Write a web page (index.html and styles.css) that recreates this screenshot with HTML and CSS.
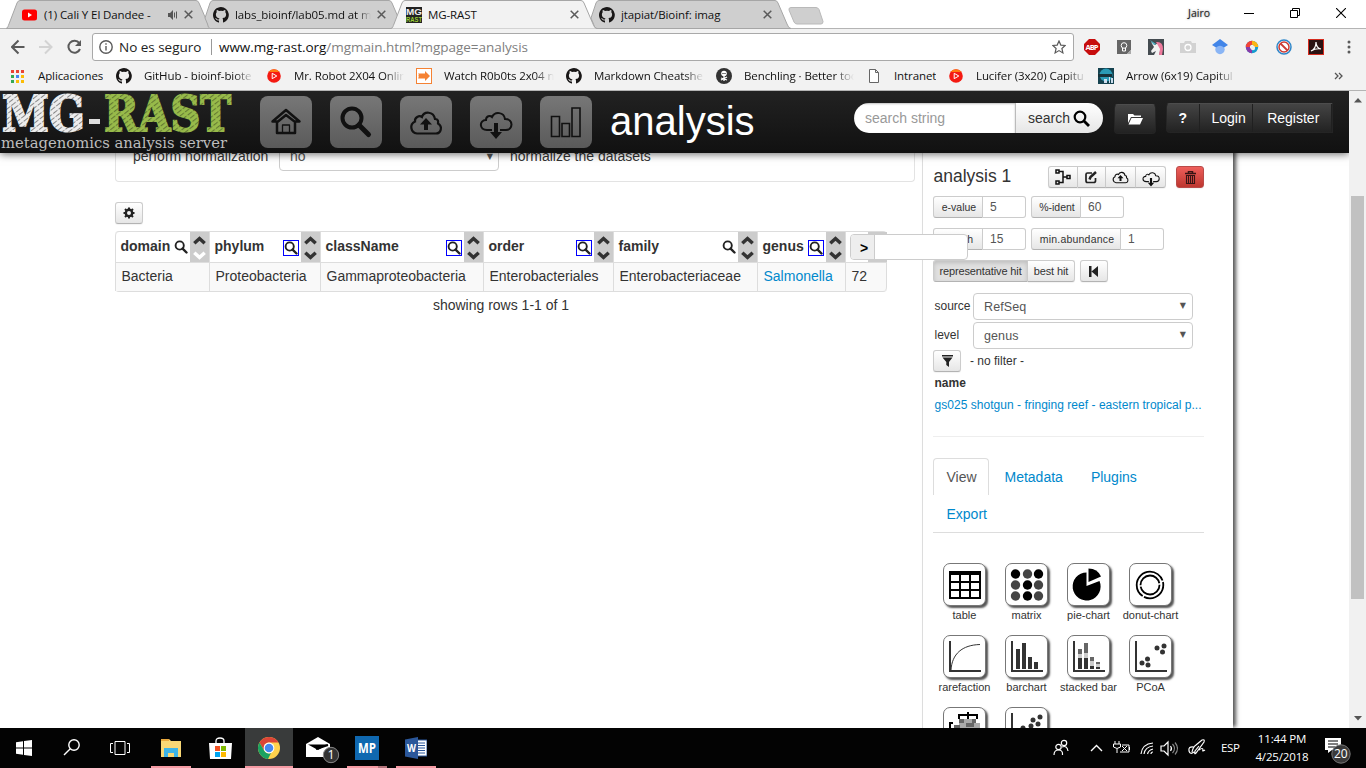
FILE: index.html
```html
<!DOCTYPE html>
<html lang="es">
<head>
<meta charset="utf-8">
<title>MG-RAST</title>
<link rel="stylesheet" href="styles.css">
</head>
<body>
<svg class="defs" width="0" height="0">
  <defs>
    <symbol id="github" viewBox="0 0 16 16"><path fill="#191717" d="M8 0C3.6 0 0 3.6 0 8c0 3.5 2.3 6.500 5.500 7.600.4.1.5-.2.5-.4v-1.700c-2.200.5-2.700-.9-2.700-.9-.4-.9-.9-1.200-.9-1.200-.7-.5.1-.5.1-.5.8.1 1.200.8 1.200.8.7 1.200 1.900.9 2.300.7 0-.5.3-.9.5-1.100-1.800-.2-3.600-.9-3.600-4 0-.9.3-1.600.8-2.100 0-.2-.3-1 .1-2.100 0 0 .7-.2 2.200.8a8 8 0 0 1 4 0c1.500-1 2.200-.8 2.200-.8.4 1.100.1 1.900.1 2.100.5.6.8 1.300.8 2.100 0 3.100-1.900 3.700-3.700 3.900.3.3.6.8.6 1.500v2.400c0 .2.1.5.6.4A8 8 0 0 0 8 0z"/></symbol>
    <symbol id="close" viewBox="0 0 9 9"><path d="M.7.7l7.600 7.600M8.300.7L.7 8.300" stroke="#5a5a5a" stroke-width="1.500"/></symbol>
    <symbol id="play" viewBox="0 0 14 14"><circle cx="7" cy="7" r="6.800" fill="#f41a12"/><path d="M1.500 3a6.800 6.800 0 0 1 11 0z" fill="#ff7a10"/><path d="M5.200 4.300v5.400L9.800 7z" fill="none" stroke="#fff"/></symbol>
    <symbol id="glass" viewBox="0 0 14 14"><circle cx="5.700" cy="5.500" r="4.100" fill="none" stroke="#222" stroke-width="1.900"/><path d="M8.600 8.600l3.900 3.900" stroke="#222" stroke-width="2.400" stroke-linecap="round"/></symbol>
    <symbol id="up" viewBox="0 0 12 8"><path d="M1.200 6.600L6 2.200l4.800 4.400" fill="none" stroke="currentColor" stroke-width="3.200"/></symbol>
    <symbol id="down" viewBox="0 0 12 8"><path d="M1.200 1.400L6 5.800l4.800-4.400" fill="none" stroke="currentColor" stroke-width="3.200"/></symbol>
    <symbol id="cloudup" viewBox="0 0 34 26"><path d="M8 24.500a6.300 6.300 0 0 1-2-12c-.5-4 4-6.500 7-4.500 2-6 11.500-6 13 2 4 0 3 3.500 3 4.500 5 3 3 10-2 10z" fill="none" stroke="currentColor" stroke-width="2.200"/><path d="M17 9l6 6.500h-4V21h-4v-5.500h-4z" fill="currentColor"/></symbol>
    <symbol id="clouddown" viewBox="0 0 34 28"><path d="M13 19H8c-8 0-8-10-1-10 0-4 4-5 6-3 3-6 12-5 13 2 9 0 8 11 1 11h-6" fill="none" stroke="currentColor" stroke-width="2"/><path d="M15 12h4v9h4l-6 7-6-7h4z" fill="currentColor"/></symbol>
    <pattern id="hatchW" width="7" height="4" patternUnits="userSpaceOnUse" patternTransform="rotate(-38)"><rect width="7" height="4" fill="#ededed"/><rect width="5.500" height="1" y="2" fill="#888"/></pattern>
    <pattern id="hatchG" width="7" height="4" patternUnits="userSpaceOnUse" patternTransform="rotate(-38)"><rect width="7" height="4" fill="#98bb4a"/><rect width="5.500" height="1.100" y="2" fill="#647a33"/></pattern>
  </defs>
</svg>

<div class="tabstrip">
  <div class="tab first"><svg class="tabshape" width="207" height="29"><path d="M0 28.500C2 28 2 26 3 24L11 3Q12 .5 14 .5H190Q192 .5 193 3l9 21q1.500 4.500 4 4.500z"/></svg>
    <svg class="fav" viewBox="0 0 16 16"><rect x="0" y="2.500" width="15" height="11" rx="2.500" fill="#f00"/><path d="M6 5.500v5L10 8z" fill="#fff"/></svg><span class="ttl yt">(1) Cali Y El Dandee -</span>
    <svg class="snd" width="11" height="10"><path d="M0 3h2l3-3v10L2 7H0z" fill="#555"/><path d="M6.500 2.500v5M8.500 1.500v7" stroke="#555"/></svg><svg class="x" width="9" height="9"><use href="#close"/></svg></div>
  <div class="tab cut"><svg class="tabshape" width="207" height="29"><path d="M6 28.500Q4 28 3.500 24L1 18 6 3Q7 .5 9 .5H185Q187 .5 188 3l9 21q1.500 4.500 4 4.500z"/></svg>
    <svg class="fav"><use href="#github"/></svg><span class="ttl lb">labs_bioinf/lab05.md at m</span><svg class="x" width="9" height="9"><use href="#close"/></svg></div>
  <div class="tab on"><svg class="tabshape" width="207" height="29"><path d="M0 28.500C2 28 2 26 3 24L11 3Q12 .5 14 .5H190Q192 .5 193 3l9 21q1.500 4.500 4 4.500"/></svg>
    <svg class="fav" viewBox="0 0 16 16"><rect width="16" height="16" fill="#222"/><text x="0" y="8" font-size="9" textLength="16" lengthAdjust="spacingAndGlyphs" fill="#eee" class="favtext">MG</text><text x="0" y="15" font-size="7" textLength="16" lengthAdjust="spacingAndGlyphs" fill="#9c3" class="favtext">RAST</text></svg><span class="ttl mg">MG-RAST</span><svg class="x" width="9" height="9"><use href="#close"/></svg></div>
  <div class="tab cut"><svg class="tabshape" width="207" height="29"><path d="M6 28.500Q4 28 3.500 24L1 18 6 3Q7 .5 9 .5H185Q187 .5 188 3l9 21q1.500 4.500 4 4.500z"/></svg>
    <svg class="fav"><use href="#github"/></svg><span class="ttl jt">jtapiat/Bioinf: imag</span><svg class="x" width="9" height="9"><use href="#close"/></svg></div>
  <svg class="newtab" width="36" height="18"><path d="M3 .5h25q2 0 3 2l4 12q0 2.500-2 2.500H9q-2 0-3-2L1 3Q.5.5 3 .5z" fill="#cfcfcf" stroke="#b9b9b9"/></svg>
  <div class="winctl"><span class="user">Jairo</span>
    <svg width="10" height="10"><path d="M0 5.500h10" stroke="#000"/></svg>
    <svg width="10" height="10"><path d="M.5 2.500h7v7h-7zM2.500 2.500v-2h7v7h-2" fill="none" stroke="#000"/></svg>
    <svg width="10" height="10"><path d="M0 0l10 10M10 0L0 10" stroke="#000" stroke-width="1.100"/></svg></div>
</div>

<div class="toolbar">
  <svg class="navs" width="72" height="16" fill="none" stroke-width="2"><path d="M13.500 8H1.500M7.500 1.500L1 8l6.500 6.500" stroke="#5a5a5a"/><path d="M28 8h12M34 1.500L40.500 8 34 14.500" stroke="#d3d3d3"/><path d="M68.300 4.200A6 6 0 1 0 69 10" stroke="#5a5a5a"/><path d="M70 1v6h-6z" fill="#5a5a5a"/></svg>
  <div class="omni"><svg width="14" height="14" fill="none" stroke="#5a5a5a" stroke-width="1.400"><circle cx="7" cy="7" r="6.200"/><path d="M7 6v4.500M7 3.300v1.500"/></svg><span class="sec">No es seguro</span><i></i><span class="url">www.mg-rast.org<b>/mgmain.html?mgpage=analysis</b></span>
    <svg class="star" width="14" height="14"><path d="M7 1l1.800 4.100 4.400.4-3.300 3 1 4.400L7 10.600l-3.900 2.300 1-4.400-3.300-3 4.400-.4z" fill="none" stroke="#5a5a5a" stroke-width="1.200"/></svg></div>
  <div class="exts">
    <svg viewBox="0 0 16 16"><path d="M5 0h6l5 5v6l-5 5H5l-5-5V5z" fill="#c70d0d"/><text x="1.500" y="10.800" font-size="7.500" font-weight="700" fill="#fff" textLength="13">ABP</text></svg>
    <svg viewBox="0 0 16 16"><path d="M1 1h14v10l-4 4H1z" fill="#666"/><circle cx="8" cy="6.500" r="2.800" fill="none" stroke="#fff"/><path d="M6.500 9v3h3V9" fill="none" stroke="#fff"/><path d="M15 11v4h-4z" fill="#aaa"/></svg>
    <svg viewBox="0 0 16 16"><rect width="16" height="16" fill="#444b50"/><path d="M3 3l4 3 3-2 3 4-2 8H6l2-4-4 2-1-2 3-4z" fill="#f1f1f1"/><path d="M8 3q7-1 7 7l-1 6h-3l1-6z" fill="#ee7b9d"/><path d="M2 1l6 4-2 1z" fill="#4fb4c8"/></svg>
    <svg viewBox="0 0 16 16"><path d="M0 4h4l1-2h6l1 2h4v10H0z" fill="#d2d2d2"/><circle cx="8" cy="8.500" r="3" fill="none" stroke="#fff" stroke-width="1.300"/></svg>
    <svg viewBox="0 0 16 16"><circle cx="8" cy="10.500" r="4.700" fill="#8ab5f5"/><path d="M8 0l8 6-4 2.500Q8 5 4 8.500L0 6z" fill="#4285e8"/></svg>
    <svg viewBox="0 0 16 16"><g fill="none" stroke-width="4"><circle cx="8" cy="8" r="4.200" stroke="#159bd0" /><path d="M8 12.200A4.200 4.200 0 0 1 3.800 8" stroke="#8a3ba8"/><path d="M3.800 8A4.200 4.200 0 0 1 8 3.800" stroke="#f44336"/><path d="M8 3.800A4.200 4.200 0 0 1 12.200 8" stroke="#fbb514"/></g><circle cx="9" cy="9" r="2.200" fill="#eee"/></svg>
    <svg viewBox="0 0 16 16"><circle cx="8" cy="8" r="7" fill="#fff" stroke="#2d86c9" stroke-width="1.500"/><circle cx="8" cy="8" r="5" fill="none" stroke="#cc3b33" stroke-width="1.500"/><path d="M4.500 4.500l7 7" stroke="#cc3b33" stroke-width="1.800"/></svg>
    <svg viewBox="0 0 16 16"><rect x=".5" y=".5" width="15" height="15" fill="#2b1212" stroke="#d52b1e"/><path d="M3 12q5-2 5-9 0 6 5 7-5-1-10 2z" fill="none" stroke="#fff" stroke-width="1.200"/></svg>
  </div>
  <svg class="dots" width="4" height="14" fill="#5a5a5a"><circle cx="2" cy="2" r="1.500"/><circle cx="2" cy="7" r="1.500"/><circle cx="2" cy="12" r="1.500"/></svg>
</div>

<div class="bookmarks">
  <div class="bm b1"><svg class="apps" width="13" height="13"><path fill="#ea4335" d="M0 0h3v3H0zM5 0h3v3H5zM10 0h3v3h-3z"/><path fill="#34a853" d="M0 5h3v3H0zM0 10h3v3H0z"/><path fill="#4285f4" d="M5 5h3v3H5z"/><path fill="#fbbc05" d="M10 5h3v3h-3zM5 10h3v3H5zM10 10h3v3h-3z"/></svg><span>Aplicaciones</span></div>
  <div class="bm b2"><svg><use href="#github"/></svg><span class="fade">GitHub - bioinf-biote</span></div>
  <div class="bm b3"><svg viewBox="-1 -1 16 16"><use href="#play" width="14" height="14"/></svg><span class="fade">Mr. Robot 2X04 Onlin</span></div>
  <div class="bm b4"><svg viewBox="0 0 16 16"><rect x=".5" y=".5" width="15" height="15" fill="#fff" stroke="#f58233"/><path d="M2 5.500h7V3l5 5-5 5v-2.500H2l1-1H2l1-1.500-1-1h1z" fill="#f58233"/></svg><span class="fade">Watch R0b0ts 2x04 n</span></div>
  <div class="bm b5"><svg><use href="#github"/></svg><span class="fade">Markdown Cheatshe</span></div>
  <div class="bm b6"><svg viewBox="0 0 16 16"><circle cx="8" cy="8" r="8" fill="#333"/><circle cx="8" cy="5.500" r="2.800" fill="#fff"/><path d="M8 8v5M5 10l6 2M11 9l-6 3" stroke="#fff" stroke-width="1.300"/><path d="M6.500 5h1v1h-1zM8.500 5h1v1h-1z"/></svg><span class="fade">Benchling · Better too</span></div>
  <div class="bm b7"><svg viewBox="0 0 16 16"><path d="M3.500 1.500h6l3 3v10h-9zM9.500 1.500v3h3" fill="#fff" stroke="#666"/></svg><span>Intranet</span></div>
  <div class="bm b8"><svg viewBox="-1 -1 16 16"><use href="#play" width="14" height="14"/></svg><span class="fade">Lucifer (3x20) Capitu</span></div>
  <div class="bm b9"><svg viewBox="0 0 16 16"><rect width="16" height="16" fill="#15424f"/><circle cx="8" cy="7" r="6.500" fill="#2a9ab5"/><path d="M0 6h14v3H0z" fill="#17323a"/><path d="M6 11h3v4H6zM11 9h1v6h-1zM13 10h2v5h-2z" fill="#cde"/></svg><span class="fade">Arrow (6x19) Capitul</span></div>
  <svg class="more" width="9" height="8"><path d="M1 1l3 3-3 3M5 1l3 3-3 3" fill="none" stroke="#555" stroke-width="1.300"/></svg>
</div>

<div class="viewport">
<div class="page">
  <header class="navbar">
    <svg class="logo" width="240" height="62"><g class="slab" font-size="48" font-weight="700" stroke-width="2"><text x="2" y="40" textLength="83" lengthAdjust="spacingAndGlyphs" fill="url(#hatchW)" stroke="url(#hatchW)">MG</text><path d="M89 28h11v5H89z" fill="#ddd"/><text x="104" y="40" textLength="127" lengthAdjust="spacingAndGlyphs" fill="url(#hatchG)" stroke="url(#hatchG)">RAST</text></g><text class="slab" x="1" y="57" font-size="15.500" textLength="226" lengthAdjust="spacingAndGlyphs" fill="#bdbdbd">metagenomics analysis server</text></svg>
    <div class="icons">
      <div><svg width="32" height="32" fill="none" stroke="#111" stroke-width="2.500" stroke-linejoin="round"><path d="M7 15v12h18V15M2.500 15.500L16 4l13.500 11.500h-5L16 9l-8 6.500z"/><path d="M12.500 27v-8h7v8" stroke-width="1.300"/></svg></div>
      <div><svg width="34" height="34"><circle cx="13" cy="13" r="9.500" fill="none" stroke="#111" stroke-width="4"/><path d="M20 20l9.500 9.500" stroke="#111" stroke-width="5" stroke-linecap="round"/></svg></div>
      <div><svg width="34" height="26"><use href="#cloudup"/></svg></div>
      <div><svg class="cd" width="34" height="28"><use href="#clouddown"/></svg></div>
      <div><svg width="32" height="32" fill="none" stroke="#111" stroke-width="1.600"><path d="M1.500 10.500h8v20h-8zM12 17.500h7.500v13H12zM22 2h8v28.500h-8z"/></svg></div>
    </div>
    <h1>analysis</h1>
    <div class="search"><span class="ph">search string</span><span class="go">search <svg width="18" height="18"><circle cx="7" cy="7" r="5.300" fill="none" stroke="#000" stroke-width="2.200"/><path d="M11 11l5 5" stroke="#000" stroke-width="2.800"/></svg></span></div>
    <div class="dark folder"><svg width="15" height="12" fill="#fff"><path d="M0 1h5l1.500 1.500H13V4H3L0 10z"/><path d="M3.500 5H15l-3 6.500H.5z"/></svg></div>
    <div class="dark group"><span>?</span><span>Login</span><span>Register</span></div>
  </header>

  <main class="body">
    <section class="content">
      <div class="well"><span class="lbl">perform normalization</span><span class="select">no<small>▼</small></span><span>normalize the datasets</span></div>
      <div class="btn gear"><svg width="12" height="12"><circle cx="6" cy="6" r="3.200" fill="none" stroke="#222" stroke-width="2.400"/><path d="M6 .5v2M6 9.500v2M.5 6h2M9.500 6h2M2 2l1.500 1.500M8.500 8.500L10 10M10 2L8.500 3.500M3.500 8.500L2 10" stroke="#222" stroke-width="2"/></svg></div>
      <div class="grid">
        <div class="th"><b>domain</b><svg class="g"><use href="#glass"/></svg><span class="sort first"><svg><use href="#up"/></svg><svg><use href="#down"/></svg></span></div>
        <div class="th"><b>phylum</b><svg class="g box"><use href="#glass"/></svg><span class="sort"><svg><use href="#up"/></svg><svg><use href="#down"/></svg></span></div>
        <div class="th"><b>className</b><svg class="g box"><use href="#glass"/></svg><span class="sort"><svg><use href="#up"/></svg><svg><use href="#down"/></svg></span></div>
        <div class="th"><b>order</b><svg class="g box"><use href="#glass"/></svg><span class="sort"><svg><use href="#up"/></svg><svg><use href="#down"/></svg></span></div>
        <div class="th"><b>family</b><svg class="g"><use href="#glass"/></svg><span class="sort"><svg><use href="#up"/></svg><svg><use href="#down"/></svg></span></div>
        <div class="th"><b>genus</b><svg class="g box"><use href="#glass"/></svg><span class="sort"><svg><use href="#up"/></svg><svg><use href="#down"/></svg></span></div>
        <div class="th last"><span class="sort"></span><div class="pop"><span>&gt;</span><i></i></div></div>
        <div class="td">Bacteria</div><div class="td">Proteobacteria</div><div class="td">Gammaproteobacteria</div><div class="td">Enterobacteriales</div><div class="td">Enterobacteriaceae</div><div class="td link">Salmonella</div><div class="td">72</div>
      </div>
      <p class="rows">showing rows 1-1 of 1</p>
    </section>

    <aside class="side">
      <div class="head"><span class="h">analysis 1</span>
        <div class="bgroup"><span class="btn w30"><svg width="16" height="16" fill="none" stroke="#111" stroke-width="1.500"><path d="M1 1h3v3H1zM1 12h3v3H1zM12 6.500h3v3h-3zM4 2.500h4v11H4M8 8h4"/></svg></span><span class="btn w28"><svg width="13" height="13" fill="none" stroke="#222"><path d="M7 2H2.500Q1 2 1 3.500v6Q1 11.500 2.500 11.500h6Q10.500 11.500 10.500 10V7" stroke-width="1.700"/><path d="M4.500 8.500l1-2.500L11 1" stroke-width="2.500"/></svg></span><span class="btn w30"><svg width="17" height="14"><use href="#cloudup"/></svg></span><span class="btn w30"><svg class="low" width="18" height="16"><use href="#clouddown"/></svg></span></div>
        <span class="btn red"><svg width="11" height="13" fill="none" stroke="#381414"><path d="M0 2.500h11M3.500 2V.5h4V2" stroke-width="1.500"/><path d="M1.500 4.500v8h8v-8zM3.500 5v7M5.500 5v7M7.500 5v7" stroke-width="1.100"/></svg></span></div>
      <div class="params"><div class="pair"><b>e-value</b><i>5</i></div><div class="pair"><b>%-ident</b><i>60</i></div></div>
      <div class="params"><div class="pair"><b class="len">length</b><i>15</i></div><div class="pair"><b class="wide">min.abundance</b><i>1</i></div></div>
      <div class="hits"><span class="btn active">representative hit</span><span class="btn best">best hit</span><span class="btn step"><svg width="10" height="11" fill="#222"><path d="M0 0h2.500v11H0zM9 0v11L2.500 5.500z"/></svg></span></div>
      <div class="field"><label>source</label><span class="sel">RefSeq<small>▼</small></span></div>
      <div class="field"><label>level</label><span class="sel">genus<small>▼</small></span></div>
      <div class="filter"><span class="btn"><svg width="11" height="12" fill="#222"><path d="M0 0h11v1.500H0zM.5 2.500h10L7 7v5L4.300 10V7z"/></svg></span>- no filter -</div>
      <div class="name">name</div>
      <div class="sample">gs025 shotgun - fringing reef - eastern tropical p...</div>
      <div class="tabs"><span class="cur">View</span><span class="meta">Metadata</span><span>Plugins</span><span>Export</span></div>
      <div class="charts">
        <div><svg><path d="M5 7h32v28H5z" fill="#000"/><path d="M7 11h8v6H7zM17 11h8v6h-8zM27 11h8v6h-8zM7 19h8v6H7zM17 19h8v6h-8zM27 19h8v6h-8zM7 27h8v6H7zM17 27h8v6h-8zM27 27h8v6h-8z" fill="#fff"/></svg>table</div>
        <div><svg fill="#444"><circle cx="9.500" cy="10" r="4.700" fill="#000"/><circle cx="21.500" cy="10" r="4.700"/><circle cx="32.500" cy="10" r="4.700" fill="#000"/><circle cx="9.500" cy="21" r="4.700"/><circle cx="21.500" cy="21" r="4.700" fill="#000"/><circle cx="32.500" cy="21" r="4.700"/><circle cx="9.500" cy="32" r="4.700"/><circle cx="21.500" cy="32" r="4.700" fill="#000"/><circle cx="32.500" cy="32" r="4.700"/></svg>matrix</div>
        <div><svg><path d="M18.500 22V8.500A14 14 0 1 0 31.500 17z"/><path d="M20.500 18V4.500q9 0 12.500 8z"/></svg>pie-chart</div>
        <div><svg fill="none" stroke="#000" stroke-width="1.800"><circle cx="20" cy="21" r="13.300" stroke-dasharray="27 1.500 50 1.500"/><circle cx="20" cy="21" r="9.500" stroke-dasharray="28 1.500"/></svg>donut-chart</div>
        <div><svg fill="none" stroke="#333"><path d="M6 5v30h31" stroke-width="2"/><path d="M7 34C8 18 18 9 36 8.500" stroke-width="1"/></svg>rarefaction</div>
        <div><svg><path d="M6 5v30h31" fill="none" stroke="#333" stroke-width="2"/><path d="M10 13h4v20h-4zM16 7h4v26h-4zM22 21h4v12h-4zM28 26h4v7h-4z" fill="#333"/></svg>barchart</div>
        <div><svg><path d="M6 5v30h31" fill="none" stroke="#333" stroke-width="2"/><path d="M10 13h4v20h-4zM16 7h4v26h-4zM22 21h4v12h-4zM28 26h4v7h-4z" fill="#666"/><path d="M10 18h4v4h-4zM16 17h4v5h-4zM22 25h4v5h-4zM28 28h4v3h-4z" fill="#ccc"/><path d="M10 22h4v11h-4zM16 22h4v11h-4zM22 30h4v3h-4zM28 31h4v2h-4z" fill="#333"/></svg>stacked bar</div>
        <div><svg fill="#333"><path d="M6 5v30h31" fill="none" stroke="#333" stroke-width="2"/><circle cx="12" cy="27" r="2.500"/><circle cx="17.500" cy="23" r="2.500"/><circle cx="18" cy="29" r="2.500"/><circle cx="27" cy="12" r="2.500"/><circle cx="34" cy="10" r="2.500"/><circle cx="32.500" cy="16" r="2.500"/></svg>PCoA</div>
        <div><svg><path d="M15 11V7h18v4M24 4v7M9 15H6v8h4" fill="none" stroke="#000" stroke-width="2"/><path d="M15 11h17v4h4v10H10v-8h5z" fill="#aaa"/><path d="M15 11h5v4h-5zM28 11h4v4h-4zM10 17h6v4h-6zM22 15h8v4h-8z" fill="#666"/></svg></div>
        <div><svg fill="#333"><path d="M6 5v30h31" fill="none" stroke="#333" stroke-width="2"/><circle cx="27" cy="12" r="2.500"/><circle cx="34" cy="9" r="2.500"/><circle cx="32" cy="16" r="2.500"/><circle cx="25" cy="18" r="2.500"/><circle cx="17" cy="20" r="2.500"/></svg></div>
      </div>
    </aside>
  </main>
</div>
<div class="scroll"><svg width="8" height="5"><path d="M0 4.500L4 0l4 4.500z" fill="#555"/></svg><div class="thumb"></div><svg width="8" height="5"><path d="M0 0l4 4.500L8 0z" fill="#555"/></svg></div>
</div>

<footer class="taskbar">
  <div class="apps3">
    <span><svg width="16" height="16" fill="#fff"><path d="M0 2.300L7 1.300V7.500H0zM8 1.100L16 0v7.500H8zM0 8.500h7v6.200l-7-1zM8 8.500h8V16l-8-1.100z"/></svg></span>
    <span><svg width="18" height="18" fill="none" stroke="#fff" stroke-width="1.400"><circle cx="11" cy="6" r="5.200"/><path d="M7.300 9.700L1 16"/></svg></span>
    <span><svg width="20" height="14" fill="none" stroke="#fff"><path d="M5 .5h10v13H5zM3 2.500H.5v9H3M17 2.500h2.500v9H17"/></svg></span>
  </div>
  <div class="pins">
    <span class="run"><svg width="22" height="18"><path d="M1 0h8l2 2h10v16H1z" fill="#f8d775"/><path d="M1 0h8v2H1z" fill="#e9a93e"/><path d="M4 18V9h14v9h-4v-4H8v4z" fill="#3cb4e7"/></svg></span>
    <span><svg width="23" height="23"><path d="M7 6V4q0-3 4-3t4 3v2" fill="none" stroke="#fff" stroke-width="1.300"/><path d="M0 6h23l-1 16H1z" fill="#fff"/><path d="M6 9h5v5H6z" fill="#f25022"/><path d="M12 9h5v5h-5z" fill="#7fba00"/><path d="M6 15h5v5H6z" fill="#00a4ef"/><path d="M12 15h5v5h-5z" fill="#ffb900"/></svg></span>
    <span class="run cur"><svg width="22" height="22"><circle cx="11" cy="11" r="11" fill="#ffd24d"/><path d="M1.470 5.500A11 11 0 0 1 20.530 5.500H11A5.500 5.500 0 0 0 6.200 8.500L6.200 13.700z" fill="#dc4437"/><path d="M1.470 5.500l4.730 8.200A5.500 5.500 0 0 0 11 16.500L13 16l-3 6A11 11 0 0 1 1.470 5.500z" fill="#1ba261"/><circle cx="11" cy="11" r="5.400" fill="#fff"/><circle cx="11" cy="11" r="4.300" fill="#4688f1"/></svg></span>
    <span><svg class="mail" width="36" height="28"><path d="M2 8L14 1l12 7v13H2z" fill="#fff"/><path d="M4 8.500h20L14 14z" fill="#000"/><path d="M12 13l12-4" stroke="#000" stroke-width="2"/><circle cx="27" cy="19" r="7.700" fill="#333" stroke="#888"/><text x="23.500" y="23.300" font-size="12.500" fill="#fff">1</text></svg></span>
    <span class="run split"><svg width="24" height="24"><rect width="24" height="24" fill="#0f68b0"/><text x="3" y="17" font-size="14" font-weight="700" fill="#fff" textLength="18" lengthAdjust="spacingAndGlyphs">MP</text></svg></span>
    <span class="run"><svg width="22" height="22"><path d="M10 3h12v16H10z" fill="#fff" stroke="#2b579a"/><path d="M13 6h7M13 8.500h7M13 11h7M13 13.500h7M13 16h7" stroke="#2b579a"/><path d="M0 2.500L13 0v22L0 19.500z" fill="#2b579a"/><text x="2" y="15" font-size="11" font-weight="700" fill="#fff" textLength="9" lengthAdjust="spacingAndGlyphs">W</text></svg></span>
  </div>
  <div class="tray">
    <svg class="tr" width="168" height="20" fill="none" stroke="#fff" stroke-width="1.200"><circle cx="5.500" cy="9" r="2.700"/><path d="M1 17q0-5 4.500-5t4 5"/><circle cx="11" cy="5" r="2.700"/><path d="M9 9q5-2 6 4"/><path d="M38 13l5.500-5.500L49 13" stroke-width="1.400"/><path d="M62 3v3M66 3v3M60.500 6h7v3q-3.500 3-7 0zM64 11v4M69 7h7v7h-9M76.500 9v3M69 8l5 5M74 8l-5 5" stroke-width="1"/><path d="M88 16Q89 6 100 5M91 16q1-7 9-8M94.500 16q1-4 5.500-5M98 16q0-2 2-2" stroke-width="1.200"/><path d="M108 8h3l4-4v13l-4-4h-3z"/><path d="M117.500 8q2 2.500 0 5"/><path d="M119.500 6q4 4.500 0 9M122 4.500q5 6 0 12" stroke="#888"/><path d="M141 9q-6-1-5 4 1 4 5 1M139 14q1-5 4-7l6-5q3-1 2 2l-8 11q-2 2-1-2l4-5M146 12q4-3 4 0-1 2 2 0"/></svg>
    <span class="lang">ESP</span><span class="clock">11:44 PM<br>4/25/2018</span>
    <svg class="note" width="28" height="28"><path d="M1 1h16v12h-9l-4 3v-3H1z" fill="#fff"/><path d="M4 4h10M4 7h10M4 10h7" stroke="#000" stroke-width="1.200"/><circle cx="17" cy="17" r="9.200" fill="#3a3a3a" stroke="#777"/><text x="10" y="21.300" font-size="12" fill="#fff">20</text></svg>
  </div>
</footer>
</body>
</html>
```
FILE: styles.css
```css
* { box-sizing: border-box; }
body { margin: 0; width: 1366px; height: 768px; overflow: hidden; background: #fff; color: #333; font-family: "Liberation Sans", Arial, sans-serif; font-size: 14px; line-height: 20px; }
svg { display: block; flex: none; }
i, b { font-style: normal; }
.defs { position: absolute; }
.favtext { font-family: "Liberation Sans", sans-serif; font-weight: 700; }

/* browser chrome */
.tabstrip, .toolbar, .bookmarks, .taskbar { font-family: "Open Sans", "Noto Sans", sans-serif; }
.tabstrip { height: 29px; display: flex; padding-left: 4px; border-bottom: 1px solid #b4b4b4; color: #111; }
.tab { position: relative; width: 193px; height: 29px; display: flex; align-items: center; padding-left: 16px; font-size: 11.500px; flex: none; }
.tab.first { padding-left: 18px; }
.tabshape { position: absolute; left: 1px; top: 0; fill: #cfcfcf; stroke: #a6a6a6; }
.first .tabshape { left: 2px; }
.cut .tabshape { left: 7px; }
.tab.on { z-index: 2; }
.tab.on .tabshape { fill: #f2f2f2; }
.fav { position: relative; width: 16px; height: 16px; margin-right: 6px; }
.ttl { position: relative; white-space: nowrap; overflow: hidden; width: 128px; letter-spacing: -.1px; }
.ttl.yt { width: 117px; }
.ttl.lb { -webkit-mask: linear-gradient(90deg, #000 90%, transparent); mask: linear-gradient(90deg, #000 90%, transparent); }
.ttl.lb, .ttl.mg, .ttl.jt { width: 136px; }
.snd { position: relative; margin: 0 5px 0 8px; }
.x { position: relative; margin-left: auto; margin-right: 4px; }
.newtab { margin: 7px 0 0 12px; }
.winctl { margin-left: auto; display: flex; align-items: center; gap: 36px; height: 26px; padding-right: 20px; }
.user { font-size: 10.500px; color: #222; text-shadow: 0 0 2px #777; margin-right: -2px; letter-spacing: 0; }
.toolbar { height: 33px; background: #f2f2f2; display: flex; align-items: center; padding: 3px 0 0 10px; }
.navs { margin: 0 9px 0 1px; }
.omni { width: 982px; height: 28px; background: #fff; border: 1px solid #a9a9a9; border-radius: 3px; display: flex; align-items: center; padding: 0 7px 0 6px; font-size: 13.500px; line-height: 18px; color: #222; white-space: nowrap; }
.omni span { margin-bottom: 1px; }
.sec { margin-left: 6px; width: 92px; letter-spacing: -.02px; }
.omni i { width: 1px; height: 16px; background: #999; margin-right: 7px; }
.url { color: #111; letter-spacing: -.04px; }
.url b { font-weight: 400; color: #808080; }
.star { margin-left: auto; }
.exts { display: flex; gap: 16px; margin-left: 10px; }
.exts svg { width: 16px; height: 16px; }
.dots { margin-left: 23px; }
.bookmarks { height: 29px; background: #f2f2f2; border-bottom: 1px solid #b4b4b4; display: flex; align-items: center; padding-left: 10px; font-size: 11.500px; color: #111; letter-spacing: -.1px; }
.bm { display: flex; align-items: center; white-space: nowrap; flex: none; }
.bm svg { width: 16px; height: 16px; margin-right: 12px; }
.bm span { overflow: hidden; }
.bm svg.apps { width: 13px; height: 13px; margin: 0 14px 0 1px; }
.b1 { width: 106px; } .b2 { width: 150px; } .b3 { width: 150px; } .b4 { width: 150px; } .b5 { width: 150px; } .b6 { width: 150px; } .b7 { width: 82px; } .b8 { width: 150px; } .b9 { width: 150px; }
.fade { width: 110px; -webkit-mask: linear-gradient(90deg, #000 82%, transparent); mask: linear-gradient(90deg, #000 82%, transparent); }
.more { margin-left: auto; margin-right: 23px; }

/* page */
.viewport { height: 637px; display: flex; overflow: hidden; }
.page { width: 1349px; height: 637px; overflow: hidden; }
.navbar { position: relative; z-index: 3; height: 62px; background: linear-gradient(#222, #111); box-shadow: 0 1px 8px rgba(0,0,0,.6); display: flex; align-items: flex-start; }
.logo { width: 240px; margin-right: 20px; }
.slab { font-family: "DejaVu Serif", serif; }
.icons { display: flex; gap: 18px; padding-top: 5px; color: #111; }
.icons div { width: 52px; height: 52px; border-radius: 8px; background: linear-gradient(#777, #5a5a5a); display: flex; align-items: center; justify-content: center; }
.cd { position: relative; top: 3px; }
h1 { margin: 7px 0 0 18px; width: 244px; font-size: 40px; line-height: 46px; font-weight: 400; color: #fff; }
.search { display: flex; width: 249px; height: 30px; margin-top: 12px; border-radius: 15px; overflow: hidden; line-height: 30px; }
.ph { width: 161px; background: #fff; color: #999; padding-left: 11px; box-shadow: inset 0 1px 2px rgba(0,0,0,.25); }
.go { flex: 1; border-left: 1px solid #bbb; background: linear-gradient(#fff, #e6e6e6); padding-left: 12px; display: flex; align-items: center; gap: 3px; }
.go svg { margin-top: 1px; }
.dark { display: flex; height: 30px; margin-top: 13px; background: linear-gradient(#444, #222); border: 1px solid #252525; border-top-color: #4c4c4c; border-radius: 4px; color: #fff; line-height: 28px; }
.folder { width: 42px; margin-left: 11px; align-items: center; justify-content: center; }
.group { margin: 12px 0 0 10px; width: 167px; border-radius: 4px 0 0 4px; }
.group span { text-align: center; border-right: 1px solid #202020; width: 79px; }
.group span:first-child { width: 33px; font-weight: 700; }
.group span:nth-child(2) { width: 54px; padding-left: 5px; }
.group span:nth-child(3) { padding-left: 2px; }

.body { display: flex; height: 595px; margin-top: -20px; }
.content { width: 922px; padding-left: 115px; }
.well { width: 800px; height: 49px; border: 1px solid #e3e3e3; border-top: 0; border-radius: 0 0 4px 4px; display: flex; padding-left: 17px; line-height: 47px; }
.lbl { width: 146px; }
.select { width: 220px; height: 30px; margin: 8px 11px 0 0; border: 1px solid #ccc; border-radius: 4px; line-height: 29px; padding: 0 5px 0 10px; color: #555; display: flex; justify-content: space-between; }
small { font-size: 8px; color: #555; font-family: "DejaVu Sans", sans-serif; }
.btn { display: flex; align-items: center; justify-content: center; height: 22px; border: 1px solid #ccc; border-bottom-color: #b3b3b3; border-radius: 3px; background: linear-gradient(#fff, #e6e6e6); color: #333; font-size: 10.500px; box-shadow: 0 1px 1px rgba(0,0,0,.05); }
.gear { width: 28px; margin: 20px 0 7px; }
.grid { display: grid; grid-template-columns: 94px 111px 163px 130px 144px 88px 42px; grid-template-rows: 30px 29px; width: 772px; border: 1px solid #ddd; border-left: 0; border-right: 0; border-radius: 4px; }
.th, .td { border-left: 1px solid #ddd; }
.th:first-child { border-radius: 4px 0 0; }
.td:last-child { border-right: 1px solid #ddd; border-radius: 0 0 4px; }
.th { position: relative; display: flex; align-items: center; padding-left: 4.500px; }
.th b { line-height: 28px; margin-bottom: 2px; }
.g { width: 16px; height: 16px; margin-left: auto; margin-right: 2px; padding: 1px; margin-top: 1px; }
.g:not(.box) { margin-right: 1px; margin-top: 0; }
.box { border: 1px solid #00f; padding: 0; }
.sort { width: 19px; height: 30px; background: #ccc; display: flex; flex-direction: column; align-items: center; justify-content: space-between; padding: 4px 1px 2px 0; color: #333; }
.sort svg { width: 13px; height: 9px; }
.sort.first svg:last-child { color: #fff; }
.last .sort { margin-left: auto; }
.td { background: #f9f9f9; border-top: 1px solid #ddd; padding-left: 5.500px; line-height: 27px; }
.link, .sample { color: #08c; }
.pop { position: absolute; z-index: 5; left: 4px; top: 2px; width: 118px; height: 26px; display: flex; border: 1px solid #ccc; border-radius: 4px; background: #fff; }
.pop span { width: 24px; background: #eee; border-right: 1px solid #ccc; border-radius: 3px 0 0 3px; text-align: center; line-height: 26px; padding-left: 3px; color: #000; font-weight: 700; }
.rows { margin: 3px 0 0; width: 772px; text-align: center; }

.side { width: 311px; height: 595px; border-left: 1px solid #ddd; padding: 33px 0 0 10px; box-shadow: 4px 0 4px -1px #555; font-size: 12px; }
.head { display: flex; height: 22px; }
.h { font-size: 17.500px; width: 115px; padding-left: .5px; }
.bgroup { display: flex; width: 118px; margin-right: 10px; }
.bgroup .btn { border-radius: 0; border-left-width: 0; color: #111; }
.bgroup .btn:first-child { border-left-width: 1px; border-radius: 3px 0 0 3px; }
.bgroup .btn:last-child { border-radius: 0 3px 3px 0; }
.w30 { width: 30px; } .w28 { width: 28px; }
.low { margin-top: 3px; }
.red { width: 28px; background: linear-gradient(#ee5f5b, #bd362f); border-color: #b94a48; }
.params { display: flex; gap: 5px; margin: 8px 0 10px; height: 22px; font-size: 10.500px; }
.pair { display: flex; line-height: 21px; }
.pair b { width: 50px; height: 22px; border: 1px solid #ccc; border-bottom-color: #b3b3b3; border-radius: 3px 0 0 3px; font-weight: 400; text-align: center; padding-left: 2px; background: linear-gradient(#fff, #e6e6e6); }
.pair b.wide { width: 90px; letter-spacing: .2px; }
.pair b.len { text-align: right; padding-right: 9px; }
.pair i { width: 43px; height: 22px; border: 1px solid #ccc; border-left: 0; border-radius: 0 3px 3px 0; padding-left: 7px; color: #555; font-size: 12px; }
.hits { display: flex; height: 22px; margin-bottom: 11px; }
.active { width: 95px; background: #e0e0e0; border-radius: 3px 0 0 3px; box-shadow: inset 0 2px 4px rgba(0,0,0,.15); }
.best { width: 47px; border-left: 0; border-radius: 0 3px 3px 0; margin-right: 5px; }
.hits .btn { white-space: nowrap; font-size: 11px; letter-spacing: -.12px; }
.step { width: 28px; }
.field { display: flex; height: 27px; margin-bottom: 2px; line-height: 27px; }
.field label { width: 40px; padding-left: 1.500px; }
.sel { width: 220px; height: 27px; border: 1px solid #ccc; border-radius: 4px; padding: 0 6px 0 10px; display: flex; justify-content: space-between; color: #555; font-size: 12.500px; letter-spacing: .1px; }
.sel small { line-height: 24px; }
.filter { display: flex; gap: 9px; margin-top: -1px; line-height: 22px; }
.filter .btn { width: 28px; }
.name { font-weight: 700; padding-left: 1.500px; line-height: 22px; font-size: 12px; }
.sample { width: 271px; height: 43px; padding-left: 1.500px; border-bottom: 1px solid #eee; line-height: 22px; font-size: 12px; white-space: nowrap; letter-spacing: .03px; }
.tabs { display: flex; flex-wrap: wrap; margin-top: 21px; width: 271px; height: 75px; border-bottom: 1px solid #ddd; font-size: 14px; color: #08c; }
.tabs span { height: 37px; line-height: 36px; padding: 0 12.500px; margin-right: 2px; border: 1px solid transparent; border-bottom: 0; }
.tabs .cur { width: 56px; color: #555; border-color: #ddd; border-radius: 4px 4px 0 0; }
.tabs .meta { margin-right: 1px; }
.charts { display: grid; grid-template-columns: repeat(4, 62px); grid-auto-rows: 72px; padding-top: 30px; font-size: 11px; line-height: 18px; }
.charts div { display: flex; flex-direction: column; align-items: center; white-space: nowrap; padding-left: 1px; }
.charts svg { width: 43px; height: 43px; border: 1px solid #777; border-radius: 7px; box-shadow: 2px 2px 2px #555; background: #fff; }
.scroll { width: 17px; background: #f1f1f1; display: flex; flex-direction: column; align-items: center; justify-content: space-between; padding: 7px 0; }
.thumb { width: 13px; height: 403px; margin-bottom: 24px; background: #c1c1c1; }

/* taskbar */
.taskbar { position: relative; z-index: 6; height: 40px; background: #030303; display: flex; color: #fff; }
.apps3, .pins { display: flex; }
.apps3 span, .pins span { width: 48px; height: 40px; display: flex; align-items: center; justify-content: center; }
.pins { gap: 1px; margin-left: 3px; }
.mail { margin: 3px 0 0 7px; }
.pins .run { background: linear-gradient(#f59aa3, #f59aa3) 50% 100% / 40px 2px no-repeat; }
.pins .split { background-image: linear-gradient(90deg, #f59aa3 78%, #b3747b 78%); }
.pins .cur { background: linear-gradient(#f59aa3, #f59aa3) 0 100% / 48px 2px no-repeat, #393b3b; }
.tray { margin-left: auto; display: flex; align-items: center; font-size: 11.500px; }
.lang { width: 26px; letter-spacing: -.3px; }
.clock { width: 70px; margin-left: 0; text-align: center; line-height: 18px; letter-spacing: -.15px; }
.note { margin: 5px 14px 0 7px; }
```
